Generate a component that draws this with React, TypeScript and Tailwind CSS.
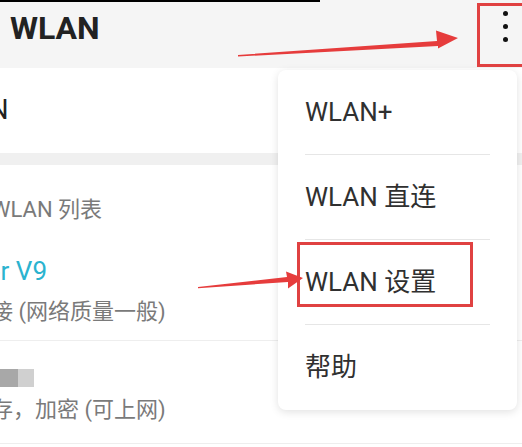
import React from "react";

const font = { fontFamily: 'Roboto, "Noto Sans CJK SC", "Noto Sans", sans-serif' };

function MenuItem({ label, divider }: { label: string; divider: boolean }) {
  return (
    <div className="h-[85px] flex flex-col px-[27px]">
      <div className="flex-1 flex items-center text-[26px] text-[#303030]">{label}</div>
      {divider ? <div className="h-px bg-[#e6e6e6]" /> : null}
    </div>
  );
}

export default function App() {
  return (
    <div className="relative w-[522px] h-[447px] overflow-hidden bg-white" style={font}>
      <header className="h-[68px] bg-[#f5f5f5] flex items-center pl-[10px]">
        <span className="text-[32px] font-bold text-[#222] leading-none -mt-[12px]">WLAN</span>
        <div className="ml-auto w-[45px] flex flex-col items-center gap-[8px] -mt-[16px] mr-[-6px]">
          <span className="w-[5px] h-[5px] rounded-full bg-[#111]" />
          <span className="w-[5px] h-[5px] rounded-full bg-[#111]" />
          <span className="w-[5px] h-[5px] rounded-full bg-[#111]" />
        </div>
      </header>

      <div className="h-[85px] flex items-center">
        <span className="-ml-[67px] text-[27px] text-[#222]">WLAN</span>
      </div>
      <div className="h-[12px] bg-[#f0f0f0]" />

      <div className="h-[88px] flex items-center">
        <span className="-ml-[9px] text-[22px] text-[#7a7a7a]">WLAN 列表</span>
      </div>

      <div className="h-[88px] flex flex-col border-b border-[#eeeeee] pt-[3px]">
        <span className="-ml-[62px] text-[26px] leading-[30px] text-[#2bb3cf]">Honor V9</span>
        <span className="-ml-[53px] mt-[12px] text-[22px] leading-[28px] text-[#7a7a7a]">已连接 (网络质量一般)</span>
      </div>

      <div className="h-[103px] flex flex-col border-b border-[#eeeeee] pt-[28px]">
        <div className="flex h-[18px]">
          <div className="w-[18px] bg-[#a8a8a8]" />
          <div className="w-[16px] bg-[#d0d0d0]" />
        </div>
        <span className="-ml-[53px] mt-[10px] text-[22px] leading-[26px] text-[#7a7a7a]">已保存，加密 (可上网)</span>
      </div>

      {/* black edge at top of screenshot */}
      <div className="absolute left-0 top-0 w-[320px] h-[2px] bg-black" />

      {/* popup menu */}
      <div className="absolute left-[278px] top-[70px] w-[239px] h-[340px] bg-white rounded-[8px] shadow-[0_2px_8px_rgba(0,0,0,0.12)] flex flex-col">
        <MenuItem label="WLAN+" divider />
        <MenuItem label="WLAN 直连" divider />
        <MenuItem label="WLAN 设置" divider />
        <MenuItem label="帮助" divider={false} />
      </div>

      {/* red highlight boxes */}
      <div className="absolute left-[477px] top-[3px] w-[52px] h-[64px] border-[3px] border-[#e04141]" />
      <div className="absolute left-[297px] top-[242px] w-[176px] h-[65px] border-[3px] border-[#e04141]" />

      {/* arrows */}
      <svg className="absolute left-0 top-0 pointer-events-none" width="522" height="447" viewBox="0 0 522 447">
        <polygon
          points="238,55 437,41 436,30.5 458,38 438,48.5 438,46 238,56.5"
          fill="#e63c3c"
        />
        <polygon
          points="198,287 287,277 286,271.5 303,278 288,288.5 288,282 198,288.2"
          fill="#e63c3c"
        />
      </svg>
    </div>
  );
}
